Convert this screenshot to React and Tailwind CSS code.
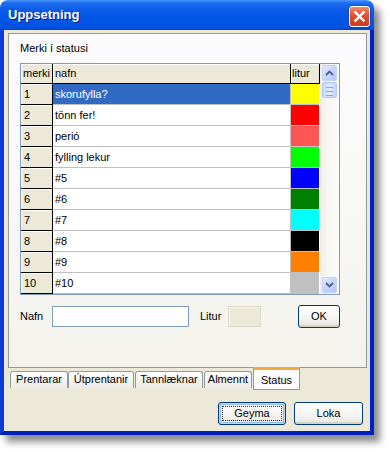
const rows = [
  ['1', 'skorufylla?', '#ffff00'],
  ['2', 'tönn fer!', '#ff0000'],
  ['3', 'perió', '#ff5555'],
  ['4', 'fylling lekur', '#00ff00'],
  ['5', '#5', '#0000ff'],
  ['6', '#6', '#008000'],
  ['7', '#7', '#00ffff'],
  ['8', '#8', '#000000'],
  ['9', '#9', '#ff8000'],
  ['10', '#10', '#c0c0c0'],
];

function CloseBtn() {
  return (
    <div className="mt-[6px] w-[21px] h-[21px] rounded-[3px] border border-white bg-[linear-gradient(180deg,#f08a6c_0%,#e0512f_45%,#cc3a1a_100%)] flex items-center justify-center shadow-[0_0_0_1px_rgba(0,40,160,0.3)]">
      <svg width="13" height="13" viewBox="0 0 13 13">
        <path d="M2.5 2.5 L10.5 10.5 M10.5 2.5 L2.5 10.5" stroke="#fff" strokeWidth="2.4" strokeLinecap="square" />
      </svg>
    </div>
  );
}

function ScrollBtn({ dir }) {
  return (
    <div className="w-[15px] h-[16px] shrink-0 rounded-[2px] border border-[#c3d3fd] bg-[linear-gradient(135deg,#e1eafe_0%,#c5d5fc_50%,#b4c8f6_100%)] flex items-center justify-center">
      <svg width="9" height="6" viewBox="0 0 9 6">
        {dir === 'up' ? (
          <path d="M1 5 L4.5 1.5 L8 5" stroke="#4d6185" strokeWidth="1.8" fill="none" />
        ) : (
          <path d="M1 1 L4.5 4.5 L8 1" stroke="#4d6185" strokeWidth="1.8" fill="none" />
        )}
      </svg>
    </div>
  );
}

function Thumb() {
  return (
    <div className="w-[15px] h-[16px] shrink-0 mt-[1px] rounded-[2px] border border-[#b6c9f6] bg-[linear-gradient(90deg,#c9d8fc_0%,#d7e2fd_50%,#c4d4fb_100%)] flex flex-col items-center justify-center gap-[1px]">
      <div className="w-[7px] h-[1px] bg-[#eef3fe]" />
      <div className="w-[7px] h-[1px] bg-[#8ca6e2]" />
      <div className="w-[7px] h-[1px] bg-[#eef3fe]" />
      <div className="w-[7px] h-[1px] bg-[#8ca6e2]" />
      <div className="w-[7px] h-[1px] bg-[#eef3fe]" />
      <div className="w-[7px] h-[1px] bg-[#8ca6e2]" />
    </div>
  );
}

function Grid() {
  return (
    <div className="mt-[8px] w-[320px] h-[232px] border border-[#7f9db9] bg-white flex">
      <div className="w-[299px] flex flex-col">
        <div className="h-[20px] flex bg-[#ece9d8] border-b border-black">
          <div className="w-[32px] border-r border-black pl-[2px] flex items-center shadow-[inset_1px_1px_0_#fff]">merki</div>
          <div className="w-[238px] border-r border-black pl-[2px] flex items-center shadow-[inset_1px_1px_0_#fff]">nafn</div>
          <div className="w-[29px] border-r border-black pl-[1px] flex items-center shadow-[inset_1px_1px_0_#fff]">litur</div>
        </div>
        {rows.map(([n, name, color], i) => (
          <div key={n} className="h-[21px] flex">
            <div className="w-[32px] bg-[#ece9d8] border-r border-b border-black pl-[3px] flex items-center shadow-[inset_1px_1px_0_#fff]">{n}</div>
            <div className={i === 0 ? 'w-[238px] border-r border-b border-[#c0c0c0] pl-[2px] flex items-center bg-[#316ac5] text-white' : 'w-[238px] border-r border-b border-[#c0c0c0] pl-[2px] flex items-center'}>{name}</div>
            <div className="w-[28px] border-b border-[#c0c0c0]" style={{ backgroundColor: color }} />
          </div>
        ))}
      </div>
      <div className="w-[19px] bg-[linear-gradient(90deg,#eeede5,#f7f6f2_40%,#fbfbf9)] flex flex-col pl-[2px] pt-[1px] pb-[1px]">
        <ScrollBtn dir="up" />
        <Thumb />
        <div className="flex-1" />
        <ScrollBtn dir="down" />
      </div>
    </div>
  );
}

function XPButton({ children, w, focused }) {
  return (
    <div className={(focused ? 'shadow-[inset_0_0_0_1px_#c6d7f5,inset_0_0_0_2px_#98b8ea] ' : 'shadow-[inset_0_-2px_0_#d6d0c5] ') + 'relative h-[23px] rounded-[3px] border border-[#003c74] bg-[linear-gradient(180deg,#ffffff_0%,#f6f6f3_50%,#e8e7e0_100%)] flex items-center justify-center ' + w}>
      {focused && <div className="absolute inset-[3px] border border-dotted border-[#333]" />}
      <span className="relative">{children}</span>
    </div>
  );
}

function Tab({ label, w, ml }) {
  return (
    <div className={'mt-[4px] h-[17px] border-t border-x border-[#919b9c] rounded-t-[3px] bg-[linear-gradient(180deg,#ffffff_0%,#f3f3ef_50%,#ecebe6_100%)] flex items-center justify-center pb-[1px] ' + w + ' ' + ml}>
      {label}
    </div>
  );
}

export default function App() {
  return (
    <div className="w-[390px] h-[452px] bg-white font-['Liberation_Sans',Arial,sans-serif] text-[11px] leading-none text-black">
      <div className="w-[374px] h-[435px] flex flex-col rounded-t-[8px] shadow-[6px_7px_7px_rgba(0,0,0,0.45)]">
        <div className="h-[30px] shrink-0 rounded-t-[8px] bg-[linear-gradient(180deg,#4a97fb_0%,#1d6cf0_10%,#0a5ae8_35%,#0056e6_70%,#0053e4_90%,#0045d2_100%)] flex items-start pl-[8px] pr-[4px]">
          <span className="flex-1 mt-[8px] text-white font-bold text-[13px] leading-[14px] [text-shadow:1px_1px_0_#0a1883]">Uppsetning</span>
          <CloseBtn />
        </div>
        <div className="flex-1 flex flex-col bg-[#ece9d8] border-l-[4px] border-r-[4px] border-b-[4px] border-l-[#0b3ed9] border-r-[#0021c4] border-b-[#0021bb]">
          <div className="pt-[3px] pl-[4px] pr-[3px]">
            <div className="h-[335px] border border-[#919b9c] bg-[linear-gradient(180deg,#fcfcfe_0%,#f8f8f6_50%,#f3f2ec_100%)] pl-[11px] pt-[8px]">
              <div className="leading-[13px]">Merki í statusi</div>
              <Grid />
              <div className="mt-[10px] flex items-center h-[23px]">
                <div className="w-[32px]">Nafn</div>
                <div className="w-[137px] h-[21px] border border-[#7f9db9] bg-white" />
                <div className="ml-[11px] w-[28px]">Litur</div>
                <div className="w-[33px] h-[21px] bg-[#ece9d8] border border-[#dcd9cb] shadow-[inset_1px_1px_0_#f5f4ee]" />
                <XPButton w="ml-[37px] w-[42px]">OK</XPButton>
              </div>
            </div>
          </div>
          <div className="-mt-[1px] h-[23px] flex items-start pl-[6px] relative">
            <Tab label="Prentarar" w="w-[58px]" ml="" />
            <Tab label="Útprentanir" w="w-[66px]" ml="ml-[0px]" />
            <Tab label="Tannlæknar" w="w-[68px]" ml="ml-[1px]" />
            <Tab label="Almennt" w="w-[48px]" ml="ml-[1px]" />
            <div className="ml-[1px] w-[47px] h-[23px] bg-[#fcfcfe] border-x border-b border-[#919b9c] border-t-[3px] border-t-[#f2a93b] flex items-center justify-center pt-[2px]">
              Status
            </div>
          </div>
          <div className="mt-[12px] flex justify-end pr-[7px] gap-[8px]">
            <XPButton w="w-[68px]" focused>Geyma</XPButton>
            <XPButton w="w-[69px]">Loka</XPButton>
          </div>
        </div>
      </div>
    </div>
  );
}
